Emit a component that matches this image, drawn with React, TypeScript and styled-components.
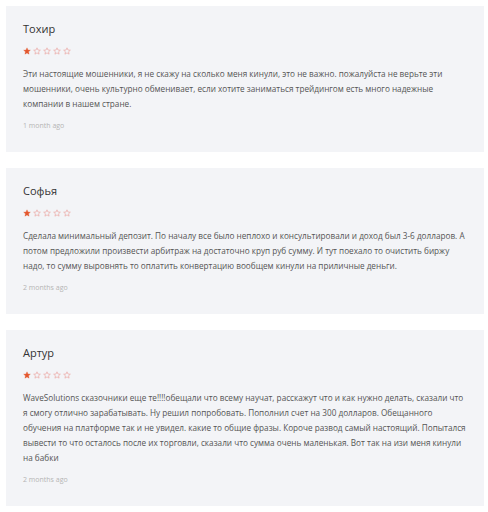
import styled, { createGlobalStyle } from 'styled-components';

const Global = createGlobalStyle`
  body {
    margin: 0;
    background: #ffffff;
    font-family: 'Open Sans', 'Noto Sans', sans-serif;
  }
`;

const List = styled.div`
  display: flex;
  flex-direction: column;
  gap: 16px;
  padding: 6px 4px 6px 6px;
`;

const Card = styled.div`
  background-color: #f3f4f7;
  padding: 14px 17px 20px 17px;
`;

const Name = styled.div`
  font-size: 11px;
  line-height: 18px;
  color: #333333;
`;

const Stars = styled.div`
  display: flex;
  gap: 2px;
  height: 10px;
  align-items: center;
  margin-top: 8px;
`;

const Text = styled.div`
  margin-top: 10px;
  font-size: 8.2px;
  line-height: 15px;
  color: #555555;
`;

const Date = styled.div`
  margin-top: 9px;
  font-size: 7px;
  line-height: 12px;
  color: #b5b5b5;
`;

type review = {
  name: string;
  rating: number;
  text: string;
  date: string;
};

function Star({ filled }: { filled: boolean }) {
  return (
    <svg width="8" height="8" viewBox="0 0 24 24">
      <path
        d="M12 2.5l2.9 6.6 7.1.6-5.4 4.7 1.6 7-6.2-3.7-6.2 3.7 1.6-7L2 9.7l7.1-.6z"
        fill={filled ? '#e4572e' : 'none'}
        stroke={filled ? '#e4572e' : '#eba4a0'}
        strokeWidth={filled ? 1 : 2}
        strokeLinejoin="round"
      />
    </svg>
  );
}

function App() {
  const reviews: review[] = [
    {
      name: 'Тохир',
      rating: 1,
      text: 'Эти настоящие мошенники, я не скажу на сколько меня кинули, это не важно. пожалуйста не верьте эти мошенники, очень культурно обменивает, если хотите заниматься трейдингом есть много надежные компании в нашем стране.',
      date: '1 month ago',
    },
    {
      name: 'Софья',
      rating: 1,
      text: 'Сделала минимальный депозит. По началу все было неплохо и консультировали и доход был 3-6 долларов. А потом предложили произвести арбитраж на достаточно круп руб сумму. И тут поехало то очистить биржу надо, то сумму выровнять то оплатить конвертацию вообщем кинули на приличные деньги.',
      date: '2 months ago',
    },
    {
      name: 'Артур',
      rating: 1,
      text: 'WaveSolutions сказочники еще те!!!!обещали что всему научат, расскажут что и как нужно делать, сказали что я смогу отлично зарабатывать. Ну решил попробовать. Пополнил счет на 300 долларов. Обещанного обучения на платформе так и не увидел. какие то общие фразы. Короче развод самый настоящий. Попытался вывести то что осталось после их торговли, сказали что сумма очень маленькая. Вот так на изи меня кинули на бабки',
      date: '2 months ago',
    },
  ];

  return (
    <>
      <Global />
      <List>
        {reviews.map((r, i) => (
          <Card key={i}>
            <Name>{r.name}</Name>
            <Stars>
              {[0, 1, 2, 3, 4].map((s) => (
                <Star key={s} filled={s < r.rating} />
              ))}
            </Stars>
            <Text>{r.text}</Text>
            <Date>{r.date}</Date>
          </Card>
        ))}
      </List>
    </>
  );
}

export default App;
